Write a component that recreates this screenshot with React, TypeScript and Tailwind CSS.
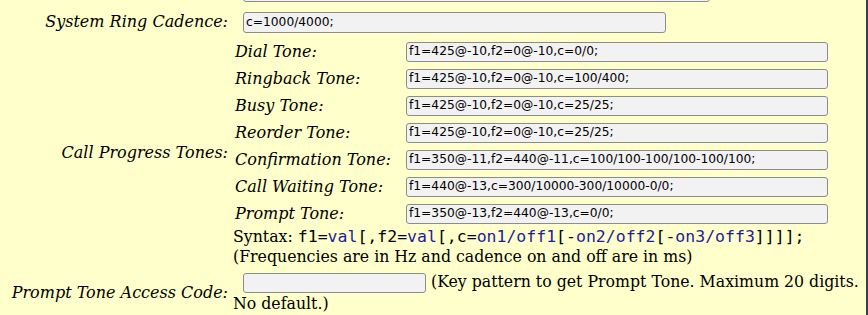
import React from "react";

function Field({ value, wide }: { value: string; wide?: boolean }) {
  return (
    <div
      className={
        "shrink-0 flex items-center rounded-[3px] border border-[#8c8c8c] bg-[#f2f2f2] pl-[2px] text-[12.25px] text-black overflow-hidden whitespace-nowrap font-['DejaVu_Sans',sans-serif] " +
        (wide ? "w-[423px] h-[21px]" : "w-[422px] h-[20px]")
      }
    >
      {value}
    </div>
  );
}

const tones: [string, string][] = [
  ["Dial Tone:", "f1=425@-10,f2=0@-10,c=0/0;"],
  ["Ringback Tone:", "f1=425@-10,f2=0@-10,c=100/400;"],
  ["Busy Tone:", "f1=425@-10,f2=0@-10,c=25/25;"],
  ["Reorder Tone:", "f1=425@-10,f2=0@-10,c=25/25;"],
  ["Confirmation Tone:", "f1=350@-11,f2=440@-11,c=100/100-100/100-100/100;"],
  ["Call Waiting Tone:", "f1=440@-13,c=300/10000-300/10000-0/0;"],
  ["Prompt Tone:", "f1=350@-13,f2=440@-13,c=0/0;"],
];

export default function App() {
  const B = "text-[#1c1c9c]";
  return (
    <div className="w-[868px] h-[315px] overflow-hidden bg-[#ffffcc] flex">
      <div className="w-[866px] h-full flex flex-col text-black text-[16px] font-['DejaVu_Serif',serif]">
        {/* previous field (cut off) */}
        <div className="h-[2px] flex items-end overflow-hidden pl-[243px]">
          <div className="shrink-0 w-[467px] h-[21px] rounded-[3px] border border-[#8c8c8c] bg-[#f2f2f2]" />
        </div>

        {/* System Ring Cadence */}
        <div className="flex items-center mt-[8px]">
          <div className="w-[233px] pr-[5px] text-right italic whitespace-nowrap">System Ring Cadence:</div>
          <div className="pl-[10px]">
            <Field value="c=1000/4000;" wide />
          </div>
        </div>

        {/* Call Progress Tones */}
        <div className="flex items-center mt-[4px]">
          <div className="w-[233px] pr-[5px] text-right italic whitespace-nowrap">Call Progress Tones:</div>
          <div className="flex flex-col">
            {tones.map(([label, val]) => (
              <div key={label} className="flex items-center h-[27px]">
                <div className="w-[173px] pl-[2px] italic whitespace-nowrap">{label}</div>
                <Field value={val} />
              </div>
            ))}
            <div className="leading-[20px] whitespace-nowrap text-[15.75px]">
              Syntax:{" "}
              <span className="text-[16.5px] font-['DejaVu_Sans_Mono',monospace]">
                f1=<span className={B}>val</span>[,f2=<span className={B}>val</span>[,c=
                <span className={B}>on1/off1</span>[-<span className={B}>on2/off2</span>[-
                <span className={B}>on3/off3</span>]]]];
              </span>
            </div>
            <div className="leading-[20px] whitespace-nowrap text-[15.75px]">
              (Frequencies are in Hz and cadence on and off are in ms)
            </div>
          </div>
        </div>

        {/* Prompt Tone Access Code */}
        <div className="flex items-center mt-[4px] shrink-0">
          <div className="w-[233px] pr-[5px] text-right italic whitespace-nowrap">Prompt Tone Access Code:</div>
          <div className="w-[632px] leading-[22px] text-[15.75px]">
            <span className="inline-block align-middle ml-[10px] w-[183px] h-[20px] rounded-[3px] border border-[#8c8c8c] bg-[#f2f2f2]" />{" "}
            (Key pattern to get Prompt Tone. Maximum 20 digits. No default.)
          </div>
        </div>
      </div>
      <div className="w-[2px] h-full bg-[#2e415e]" />
    </div>
  );
}
